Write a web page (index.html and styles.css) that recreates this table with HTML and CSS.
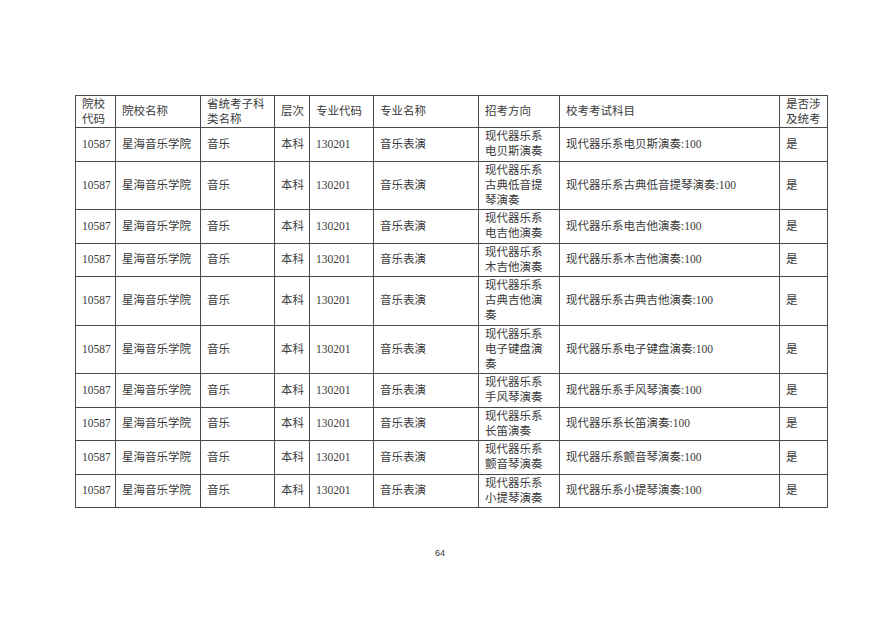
FILE: index.html
```html
<!DOCTYPE html>
<html lang="zh-CN">
<head>
<meta charset="utf-8">
<title>校考科目</title>
<link rel="stylesheet" href="styles.css">
</head>
<body>
<div class="page">
  <table class="grid">
    <colgroup>
      <col class="c1"><col class="c2"><col class="c3"><col class="c4"><col class="c5"><col class="c6"><col class="c7"><col class="c8"><col class="c9">
    </colgroup>
    <thead>
      <tr>
        <th>院校<br>代码</th>
        <th>院校名称</th>
        <th>省统考子科<br>类名称</th>
        <th>层次</th>
        <th>专业代码</th>
        <th>专业名称</th>
        <th>招考方向</th>
        <th>校考考试科目</th>
        <th>是否涉<br>及统考</th>
      </tr>
    </thead>
    <tbody>
      <tr><td>10587</td><td>星海音乐学院</td><td>音乐</td><td>本科</td><td>130201</td><td>音乐表演</td><td>现代器乐系<br>电贝斯演奏</td><td>现代器乐系电贝斯演奏:100</td><td>是</td></tr>
      <tr><td>10587</td><td>星海音乐学院</td><td>音乐</td><td>本科</td><td>130201</td><td>音乐表演</td><td>现代器乐系<br>古典低音提<br>琴演奏</td><td>现代器乐系古典低音提琴演奏:100</td><td>是</td></tr>
      <tr><td>10587</td><td>星海音乐学院</td><td>音乐</td><td>本科</td><td>130201</td><td>音乐表演</td><td>现代器乐系<br>电吉他演奏</td><td>现代器乐系电吉他演奏:100</td><td>是</td></tr>
      <tr><td>10587</td><td>星海音乐学院</td><td>音乐</td><td>本科</td><td>130201</td><td>音乐表演</td><td>现代器乐系<br>木吉他演奏</td><td>现代器乐系木吉他演奏:100</td><td>是</td></tr>
      <tr><td>10587</td><td>星海音乐学院</td><td>音乐</td><td>本科</td><td>130201</td><td>音乐表演</td><td>现代器乐系<br>古典吉他演<br>奏</td><td>现代器乐系古典吉他演奏:100</td><td>是</td></tr>
      <tr><td>10587</td><td>星海音乐学院</td><td>音乐</td><td>本科</td><td>130201</td><td>音乐表演</td><td>现代器乐系<br>电子键盘演<br>奏</td><td>现代器乐系电子键盘演奏:100</td><td>是</td></tr>
      <tr><td>10587</td><td>星海音乐学院</td><td>音乐</td><td>本科</td><td>130201</td><td>音乐表演</td><td>现代器乐系<br>手风琴演奏</td><td>现代器乐系手风琴演奏:100</td><td>是</td></tr>
      <tr><td>10587</td><td>星海音乐学院</td><td>音乐</td><td>本科</td><td>130201</td><td>音乐表演</td><td>现代器乐系<br>长笛演奏</td><td>现代器乐系长笛演奏:100</td><td>是</td></tr>
      <tr><td>10587</td><td>星海音乐学院</td><td>音乐</td><td>本科</td><td>130201</td><td>音乐表演</td><td>现代器乐系<br>颤音琴演奏</td><td>现代器乐系颤音琴演奏:100</td><td>是</td></tr>
      <tr><td>10587</td><td>星海音乐学院</td><td>音乐</td><td>本科</td><td>130201</td><td>音乐表演</td><td>现代器乐系<br>小提琴演奏</td><td>现代器乐系小提琴演奏:100</td><td>是</td></tr>
    </tbody>
  </table>
  <div class="pageno">64</div>
</div>
</body>
</html>
```

FILE: styles.css
```css
html, body {
  margin: 0;
  padding: 0;
  background: #ffffff;
}

.page {
  width: 880px;
  height: 622px;
  box-sizing: border-box;
  padding: 95px 0 0 75px;
}

.grid {
  border-collapse: collapse;
  table-layout: fixed;
  width: 752px;
  font-family: "Liberation Serif", "Noto Sans CJK SC", serif;
  font-size: 11.5px;
  line-height: 15px;
  color: #3a3a3a;
}

.grid th,
.grid td {
  border: 1px solid #4a4a4a;
  padding: 1.25px 4px 1.25px 6px;
  text-align: left;
  vertical-align: middle;
  font-weight: normal;
  white-space: nowrap;
  overflow: hidden;
}

.grid th {
  padding-top: 0.5px;
  padding-bottom: 0.5px;
}

.c1 { width: 40px; }
.c2 { width: 85px; }
.c3 { width: 74px; }
.c4 { width: 35px; }
.c5 { width: 64px; }
.c6 { width: 105px; }
.c7 { width: 81px; }
.c8 { width: 220px; }
.c9 { width: 48px; }

.pageno {
  width: 730px;
  margin-top: 40px;
  text-align: center;
  font-family: "Liberation Sans", sans-serif;
  font-size: 9px;
  line-height: 11px;
  color: #333;
}
```
